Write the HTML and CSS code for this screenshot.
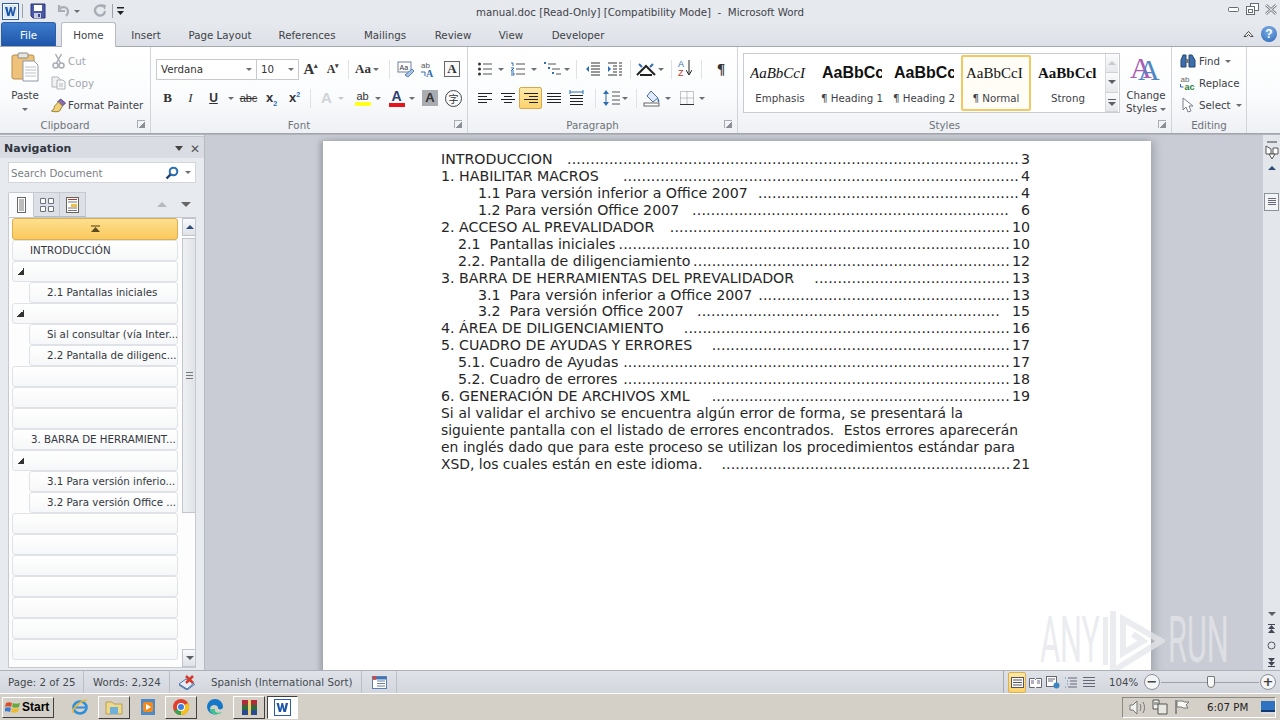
FILE: index.html
```html
<!DOCTYPE html>
<html lang="en">
<head>
<meta charset="utf-8">
<title>manual.doc - Microsoft Word</title>
<link rel="stylesheet" href="styles.css">
</head>
<body>
<div class="app">
  <header class="titlebar">
    <div class="qat">
      <svg class="wlogo" width="17" height="17" viewBox="0 0 17 17"><rect x=".5" y=".5" width="16" height="16" fill="#fff" stroke="#2a5ca8"/><rect x="2" y="2" width="13" height="13" fill="#dbe8f6"/><path d="M3 4h2.400l1.200 6 1.400-6h1.600l1.400 6 1.200-6H14l-2.200 9H9.900L8.800 8 7.500 13H5.400z" fill="#1d56a8"/></svg>
      <i class="qsep"></i>
      <svg class="q1" width="16" height="16" viewBox="0 0 16 16"><path d="M1 1h14v14H3l-2-2z" fill="#4a58a8" stroke="#2b3478"/><rect x="4" y="2" width="8" height="6" fill="#fff"/><rect x="4" y="10" width="7" height="5" fill="#c6cbe0"/><rect x="8" y="11" width="2" height="3" fill="#3b4690"/></svg>
      <svg class="q2" width="14" height="14" viewBox="0 0 14 14"><path d="M3 1v6h6M3 6c2-4 9-4 9 2 0 2-1 3-2 4" fill="none" stroke="#a9aeb6" stroke-width="2.200"/></svg>
      <span class="mini-arrow q3"></span>
      <svg class="q4" width="14" height="14" viewBox="0 0 14 14"><path d="M10 2.500A5 5 0 1 0 12 7" fill="none" stroke="#a9aeb6" stroke-width="2.400"/><path d="M8 0l5 1-1 5z" fill="#a9aeb6"/></svg>
      <i class="qsep q5"></i>
      <svg class="q6" width="9" height="10" viewBox="0 0 9 10"><rect x="1" y="1" width="7" height="1.500" fill="#222"/><path d="M1 5h7L4.500 9z" fill="#222"/></svg>
    </div>
    <div class="doc-title">manual.doc [Read-Only] [Compatibility Mode]&nbsp; -&nbsp; Microsoft Word</div>
    <div class="win-controls">
      <svg width="12" height="8" viewBox="0 0 12 8"><rect x=".5" y="2.500" width="10" height="4" rx="1" fill="#fff" stroke="#666c75"/></svg>
      <svg width="13" height="12" viewBox="0 0 13 12"><rect x="4.500" y=".5" width="8" height="7" fill="#fff" stroke="#666c75"/><rect x=".5" y="3.500" width="8" height="8" fill="#fff" stroke="#666c75"/><rect x="2.500" y="6.500" width="4" height="3" fill="none" stroke="#666c75"/></svg>
      <svg width="12" height="11" viewBox="0 0 12 11"><path d="M1 1l10 9M11 1L1 10" stroke="#7b8089" stroke-width="2.600"/><path d="M1 1l10 9M11 1L1 10" stroke="#fff" stroke-width="1"/></svg>
    </div>
  </header>

  <nav class="tabbar">
    <span class="tab file">File</span>
    <span class="tab home">Home</span>
    <span class="tab t-insert">Insert</span>
    <span class="tab t-layout">Page Layout</span>
    <span class="tab t-ref">References</span>
    <span class="tab t-mail">Mailings</span>
    <span class="tab t-review">Review</span>
    <span class="tab t-view">View</span>
    <span class="tab t-dev">Developer</span>
    <span class="tab-right">
      <svg width="11" height="8" viewBox="0 0 11 8"><path d="M1 6.500l4.500-5 4.500 5H7.500l-2-2-2 2z" fill="#fff" stroke="#444"/></svg>
      <span class="help">?</span>
    </span>
  </nav>

  <section class="ribbon">
    <div class="group g-clip">
      <div class="g-body clip-body">
        <div class="paste">
          <svg width="28" height="30" viewBox="0 0 28 30"><rect x="1" y="3" width="22" height="24" rx="2" fill="#eec27a" stroke="#b78c4a"/><rect x="7" y="1" width="10" height="5" rx="1" fill="#e7e7e0" stroke="#8a8a80"/><path d="M12 9h11l4 4v16H12z" fill="#fff" stroke="#8f9aa8"/><path d="M14 15h11M14 18h11M14 21h11M14 24h11" stroke="#b9c2cc"/></svg>
          <span class="lbl paste-l">Paste</span>
          <span class="mini-arrow"></span>
        </div>
        <div class="clip-list">
          <div class="clip-row dim"><svg width="14" height="16" viewBox="0 0 14 16"><path d="M4 1l5 9M10 1L5 10" stroke="#a8adb4" stroke-width="1.500"/><circle cx="4" cy="12.500" r="2.500" fill="none" stroke="#a8adb4" stroke-width="1.500"/><circle cx="10" cy="12.500" r="2.500" fill="none" stroke="#a8adb4" stroke-width="1.500"/></svg><span>Cut</span></div>
          <div class="clip-row dim"><svg width="15" height="14" viewBox="0 0 15 14"><path d="M1 1h6l2 2v8H1z" fill="#f0f1f3" stroke="#b0b4ba"/><path d="M6 4h6l2 2v7H6z" fill="#f7f7f8" stroke="#b0b4ba"/><path d="M8 8h4M8 10h4" stroke="#bbb"/></svg><span>Copy</span></div>
          <div class="clip-row"><svg width="16" height="15" viewBox="0 0 16 15"><path d="M10 1l5 4-3 3-5-4z" fill="#8a6fb0" stroke="#5b4580"/><path d="M8 4l4 4-3 5c-2 1-5 1-8 0 2-1 3-3 3-5z" fill="#efd27a" stroke="#9a7c30"/></svg><span>Format Painter</span></div>
        </div>
      </div>
      <div class="g-label">Clipboard<i class="launch"></i></div>
    </div>

    <div class="group g-font">
      <div class="g-body stack">
        <div class="r r1 font-r1">
          <span class="combo c-font">Verdana<b class="mini-arrow"></b></span>
          <span class="combo c-size">10<b class="mini-arrow"></b></span>
          <span class="ic w-grow serif-a big">A<sup>▴</sup></span>
          <span class="ic w-shrink serif-a small">A<sup>▾</sup></span>
          <i class="vsep s1"></i>
          <span class="ic w-aa"><em class="aa">Aa</em><b class="mini-arrow"></b></span>
          <i class="vsep s2"></i>
          <svg class="spell" width="18" height="17" viewBox="0 0 18 17"><rect x="1" y="1" width="13" height="10" fill="#fff" stroke="#6e7fa0"/><text x="2.500" y="8.500" font-size="7" font-family="Liberation Sans" fill="#334">Aa</text><path d="M8 14l7-6 2 2-6 6z" fill="#a6c7ea" stroke="#5a7fb0"/></svg>
          <svg class="spell2" width="18" height="17" viewBox="0 0 18 17"><text x="1" y="7" font-size="8" font-family="Liberation Sans" fill="#555">ab</text><text x="6" y="16" font-size="10" font-weight="700" font-family="Liberation Serif" fill="#2e6db4">A</text><path d="M1 11h4v4" fill="none" stroke="#2e6db4"/></svg>
          <span class="boxa">A</span>
        </div>
        <div class="r r2 font-r2">
          <span class="fb b">B</span><span class="fb i">I</span><span class="fb u">U</span><b class="mini-arrow ma-u"></b>
          <span class="fb strike">abc</span>
          <span class="fb xs">x<sub>2</sub></span>
          <span class="fb xs">x<sup>2</sup></span>
          <i class="vsep s3"></i>
          <span class="fb ghost">A</span><b class="mini-arrow ma-dim"></b>
          <span class="fb hl"><span>ab</span><i></i></span><b class="mini-arrow"></b>
          <span class="fb colr">A<i></i></span><b class="mini-arrow"></b>
          <span class="fb shade">A</span>
          <span class="fb zi">字</span>
        </div>
      </div>
      <div class="g-label">Font<i class="launch"></i></div>
    </div>

    <div class="group g-para">
      <div class="g-body stack">
        <div class="r r1 para-r1">
          <svg width="16" height="14" viewBox="0 0 16 14"><path d="M6 2h9M6 7h9M6 12h9" stroke="#555"/><circle cx="2.500" cy="2" r="1.500" fill="#333"/><circle cx="2.500" cy="7" r="1.500" fill="#333"/><circle cx="2.500" cy="12" r="1.500" fill="#333"/></svg><b class="mini-arrow m1"></b>
          <svg class="p2" width="16" height="14" viewBox="0 0 16 14"><path d="M6 2h9M6 7h9M6 12h9" stroke="#555"/><path d="M1 1h2v3M1 6h3L1 9h3M1 11h3v2H1" fill="none" stroke="#2e6db4"/></svg><b class="mini-arrow m1"></b>
          <svg class="p3" width="19" height="14" viewBox="0 0 19 14"><path d="M5 2h8M9 7h8M13 12h5" stroke="#555"/><path d="M1 1h2M5 6h2M9 11h2" stroke="#2e6db4" stroke-width="2"/></svg><b class="mini-arrow m2"></b>
          <i class="vsep s4"></i>
          <svg class="p4" width="16" height="14" viewBox="0 0 16 14"><path d="M6 1h9M6 4h9M6 7h9M6 10h9M6 13h9" stroke="#333"/><path d="M4 4L1 7l3 3z" fill="#2e6db4"/></svg>
          <svg class="p5" width="16" height="14" viewBox="0 0 16 14"><path d="M1 1h9M6 4h4M6 7h4M6 10h4M1 13h9M12 1h3M12 4h3M12 7h3M12 10h3M12 13h3" stroke="#333"/><path d="M1 4l3 3-3 3z" fill="#2e6db4"/></svg>
          <i class="vsep s5"></i>
          <svg class="p6" width="20" height="14" viewBox="0 0 20 14"><path d="M1 13L10 4l9 9M4 13h12" fill="none" stroke="#222" stroke-width="2"/><path d="M3 2l3 3M17 2l-3 3" stroke="#2e6db4" stroke-width="2"/></svg><b class="mini-arrow m3"></b>
          <i class="vsep s6"></i>
          <span class="sort"><em>A</em><em class="z">Z</em><svg width="6" height="16" viewBox="0 0 6 16"><path d="M3 0v14M0 10l3 5 3-5" fill="none" stroke="#222"/></svg></span>
          <i class="vsep s7"></i>
          <span class="pil">¶</span>
        </div>
        <div class="r r2 para-r2">
          <span class="al"><svg width="14" height="11" viewBox="0 0 14 11"><path d="M0 .5h14M0 3.500h9M0 6.500h14M0 9.500h9" stroke="#222"/></svg></span>
          <span class="al"><svg width="14" height="11" viewBox="0 0 14 11"><path d="M0 .5h14M3 3.500h8M0 6.500h14M3 9.500h8" stroke="#222"/></svg></span>
          <span class="al on"><svg width="14" height="11" viewBox="0 0 14 11"><path d="M0 .5h14M5 3.500h9M0 6.500h14M5 9.500h9" stroke="#222"/></svg></span>
          <span class="al"><svg width="14" height="11" viewBox="0 0 14 11"><path d="M0 .5h14M0 3.500h14M0 6.500h14M0 9.500h14" stroke="#222"/></svg></span>
          <span class="al"><svg width="15" height="16" viewBox="0 0 15 16"><path d="M1 5.500h13M1 8.500h13M1 11.500h13M1 14.500h13" stroke="#222"/><path d="M1 2h13" stroke="#2e6db4"/><path d="M1 0v4M14 0v4" stroke="#2e6db4"/></svg></span>
          <i class="vsep s8"></i>
          <svg class="ls" width="18" height="16" viewBox="0 0 18 16"><path d="M9 2h8M9 6h8M9 10h8M9 14h8" stroke="#555"/><path d="M3 0l3 4H0zM3 16l3-4H0z" fill="#2e6db4"/><path d="M3 4v8" stroke="#2e6db4"/></svg><b class="mini-arrow m4"></b>
          <i class="vsep s9"></i>
          <svg class="shd" width="18" height="17" viewBox="0 0 18 17"><path d="M8 1l7 7-5 4-6-6z" fill="#dfeafa" stroke="#4a6a9a"/><path d="M15 8c1 2 2 3 1 4s-2-1-1-4z" fill="#2e6db4"/><rect x="1" y="13" width="15" height="3" fill="#fff" stroke="#666"/></svg><b class="mini-arrow m5"></b>
          <svg class="brd" width="14" height="14" viewBox="0 0 14 14"><path d="M.5.500h13v13H.500zM.5 7h13M7 .500v13" fill="none" stroke="#8a8f96" stroke-dasharray="1 1"/><path d="M0 13.500h14" stroke="#333"/></svg><b class="mini-arrow m6"></b>
        </div>
      </div>
      <div class="g-label">Paragraph<i class="launch"></i></div>
    </div>

    <div class="group g-styles">
      <div class="g-body styles-body">
        <div class="gallery">
          <div class="st"><span class="s-em">AaBbCcI</span><small>Emphasis</small></div>
          <div class="st"><span class="s-h">AaBbCc</span><small>¶ Heading 1</small></div>
          <div class="st"><span class="s-h">AaBbCc</span><small>¶ Heading 2</small></div>
          <div class="st sel"><span class="s-n">AaBbCcI</span><small>¶ Normal</small></div>
          <div class="st"><span class="s-s">AaBbCcl</span><small>Strong</small></div>
          <div class="g-scroll">
            <span><i class="up dimmed"></i></span>
            <span><i class="down"></i></span>
            <span><i class="more"></i></span>
          </div>
        </div>
        <div class="change">
          <span class="bigA"><em class="a1">A</em><em class="a2">A</em></span>
          <span class="lbl">Change</span>
          <span class="lbl">Styles<b class="mini-arrow"></b></span>
        </div>
      </div>
      <div class="g-label">Styles<i class="launch"></i></div>
    </div>

    <div class="group g-edit">
      <div class="g-body edit-body">
        <div class="clip-row"><svg width="16" height="14" viewBox="0 0 16 14"><path d="M1 13V6l2-5h3v12zM9 13V1h3l3 5v7z" fill="#3d6fae" stroke="#24476f"/><rect x="6" y="5" width="3" height="4" fill="#777"/></svg><span>Find</span><b class="mini-arrow"></b></div>
        <div class="clip-row"><svg width="17" height="16" viewBox="0 0 17 16"><text x="1" y="7" font-size="8" font-family="Liberation Sans" fill="#666">ab</text><text x="5" y="15" font-size="9" font-weight="700" font-family="Liberation Sans" fill="#2e7d3a">ac</text><path d="M1 9v3h3" fill="none" stroke="#2e6db4"/></svg><span>Replace</span></div>
        <div class="clip-row"><svg width="14" height="16" viewBox="0 0 14 16"><path d="M2 1v12l3-3 2 5 3-1-2-5h4z" fill="#fff" stroke="#77808c"/></svg><span>Select</span><b class="mini-arrow"></b></div>
      </div>
      <div class="g-label">Editing</div>
    </div>
  </section>

  <main class="work">
    <aside class="nav">
      <div class="nav-head"><strong>Navigation</strong><b class="tri-d"></b><span class="nav-x">✕</span></div>
      <div class="search"><span>Search Document</span><svg width="14" height="14" viewBox="0 0 14 14"><circle cx="8.500" cy="5.500" r="3.800" fill="none" stroke="#2c6eb5" stroke-width="2"/><path d="M5.500 8.500L1.500 12.500" stroke="#1b3f70" stroke-width="2.400"/></svg><b class="mini-arrow"></b></div>
      <div class="nav-tabs">
        <span class="ntab active"><svg width="9" height="16" viewBox="0 0 9 16"><rect x=".5" y=".5" width="8" height="15" fill="#fff" stroke="#666"/><path d="M2 3h5M2 5h5M2 7h5M2 9h5M2 11h5M2 13h5" stroke="#777"/></svg></span>
        <span class="ntab"><svg width="14" height="14" viewBox="0 0 14 14"><path d="M.5.500h5v5h-5zM8.500.500h5v5h-5zM.5 8.500h5v5h-5zM8.500 8.500h5v5h-5z" fill="#fff" stroke="#6a7280"/></svg></span>
        <span class="ntab"><svg width="13" height="16" viewBox="0 0 13 16"><rect x=".5" y=".5" width="12" height="15" fill="#fff" stroke="#665"/><path d="M2 2.500h9" stroke="#b33"/><path d="M2 5h9M2 11h9M2 13.500h9" stroke="#777"/><rect x="5" y="7" width="6" height="3" fill="#f0c040"/></svg></span>
        <span class="nav-arrows"><i class="up g"></i><i class="down"></i></span>
      </div>
      <div class="outline">
        <ul class="rows">
          <li class="row cur"><svg width="9" height="8" viewBox="0 0 9 8"><path d="M0 1h9" stroke="#4a3a10"/><path d="M4.500 2L9 7H0z" fill="#5a4a20"/></svg></li>
          <li class="row"><span class="t1">INTRODUCCIÓN</span></li>
          <li class="row"><i class="expander"></i></li>
          <li class="row sub"><span>2.1 Pantallas iniciales</span></li>
          <li class="row"><i class="expander"></i></li>
          <li class="row sub"><span>Si al consultar (vía Inter...</span></li>
          <li class="row sub"><span>2.2 Pantalla de diligenc...</span></li>
          <li class="row"></li>
          <li class="row"></li>
          <li class="row"></li>
          <li class="row"><span class="t1 t1b">3. BARRA DE HERRAMIENT...</span></li>
          <li class="row"><i class="expander"></i></li>
          <li class="row sub"><span>3.1 Para versión inferio...</span></li>
          <li class="row sub"><span>3.2 Para versión Office ...</span></li>
          <li class="row"></li>
          <li class="row"></li>
          <li class="row"></li>
          <li class="row"></li>
          <li class="row"></li>
          <li class="row"></li>
          <li class="row"></li>
        </ul>
        <div class="nscroll">
          <span class="nbtn"><i class="up navy"></i></span>
          <span class="nthumb"><i></i></span>
          <span class="nbtn end"><i class="down"></i></span>
        </div>
      </div>
    </aside>

    <div class="doc-area">
      <article class="page">
        <div class="toc"><span>INTRODUCCION</span><i>.................................................................................................</i><span>3</span></div>
        <div class="toc"><span>1. HABILITAR MACROS</span><i>.....................................................................................</i><span>4</span></div>
        <div class="toc l2"><span>1.1 Para versión inferior a Office 2007</span><i>........................................................</i><span>4</span></div>
        <div class="toc l2"><span>1.2 Para versión Office 2007</span><i class="short">....................................................................</i><span>6</span></div>
        <div class="toc"><span>2. ACCESO AL PREVALIDADOR</span><i>.........................................................................</i><span>10</span></div>
        <div class="toc l1"><span>2.1&nbsp; Pantallas iniciales</span><i>....................................................................................</i><span>10</span></div>
        <div class="toc l1"><span>2.2. Pantalla de diligenciamiento</span><i>....................................................................</i><span>12</span></div>
        <div class="toc"><span>3. BARRA DE HERRAMIENTAS DEL PREVALIDADOR</span><i>..........................................</i><span>13</span></div>
        <div class="toc l2"><span>3.1&nbsp; Para versión inferior a Office 2007</span><i>......................................................</i><span>13</span></div>
        <div class="toc l2"><span>3.2&nbsp; Para versión Office 2007</span><i class="short">.................................................................</i><span>15</span></div>
        <div class="toc"><span>4. ÁREA DE DILIGENCIAMIENTO</span><i>......................................................................</i><span>16</span></div>
        <div class="toc"><span>5. CUADRO DE AYUDAS Y ERRORES</span><i>................................................................</i><span>17</span></div>
        <div class="toc l1"><span>5.1. Cuadro de Ayudas</span><i>...................................................................................</i><span>17</span></div>
        <div class="toc l1"><span>5.2. Cuadro de errores</span><i>...................................................................................</i><span>18</span></div>
        <div class="toc"><span>6. GENERACIÓN DE ARCHIVOS XML</span><i>................................................................</i><span>19</span></div>
        <p class="para pa">Si al validar el archivo se encuentra algún error de forma, se presentará la</p>
        <p class="para pb">siguiente pantalla con el listado de errores encontrados.&nbsp; Estos errores aparecerán</p>
        <p class="para pc">en inglés dado que para este proceso se utilizan los procedimientos estándar para</p>
        <div class="toc xsd"><span>XSD, los cuales están en este idioma.</span><i>..............................................................</i><span>21</span></div>
      </article>
      <div class="watermark" aria-label="ANY RUN">
        <span>ANY</span>
        <svg width="62" height="64" viewBox="0 0 62 64"><path d="M2 8v48M10 2v60L58 32 20 10v34l20-12-10-7" fill="none" stroke="currentColor" stroke-width="6"/></svg>
        <span>RUN</span>
      </div>
    </div>

    <div class="vbar">
      <i class="split"></i>
      <svg class="rul" width="14" height="15" viewBox="0 0 14 15"><path d="M1 1l5 3v5H1z M8 3l5 0v6H8z" fill="#fff" stroke="#555"/><path d="M4 9l3 5 3-5z" fill="#fff" stroke="#555"/></svg>
      <i class="up navy v-up"></i>
      <span class="vthumb"><svg width="8" height="8" viewBox="0 0 8 8"><path d="M0 .5h8M0 2.500h8M0 4.500h8M0 6.500h8" stroke="#667"/></svg></span>
      <i class="spacer"></i>
      <i class="down v-dn"></i>
      <svg class="dbl" width="9" height="10" viewBox="0 0 9 10"><path d="M1 .5h7" stroke="#445"/><path d="M4.500 1L8 5H1zM4.500 5L8 9H1z" fill="#445"/></svg>
      <svg class="dot-o" width="9" height="9" viewBox="0 0 9 9"><circle cx="4.500" cy="4.500" r="3.500" fill="none" stroke="#556"/></svg>
      <svg class="dbl last" width="9" height="10" viewBox="0 0 9 10"><path d="M1 9.500h7" stroke="#445"/><path d="M4.500 5L8 1H1zM4.500 9L8 5H1z" fill="#445"/></svg>
    </div>
  </main>

  <footer class="status">
    <span class="sb s-page">Page: 2 of 25</span>
    <span class="sb s-words">Words: 2,324</span>
    <span class="sb s-lang"><svg width="18" height="15" viewBox="0 0 18 15"><path d="M1 9l7-5 8 4-7 6z" fill="#e8eef8" stroke="#4a6fa8"/><path d="M1 10l8 5 8-6" fill="none" stroke="#4a6fa8"/><path d="M8 1l7 7M15 1L8 8" stroke="#d43a2a" stroke-width="2.500"/></svg><span>Spanish (International Sort)</span></span>
    <span class="sb s-macro"><svg width="15" height="13" viewBox="0 0 15 13"><rect x=".5" y=".5" width="14" height="12" fill="#fff" stroke="#5b7fae"/><rect x="1" y="1" width="13" height="2.500" fill="#3f76ba"/><path d="M5 5h8M5 7.500h8M5 10h8" stroke="#6a7f9a"/><circle cx="2.500" cy="2" r="2" fill="#d8453a"/></svg></span>
    <span class="status-right">
      <span class="vw on"><svg width="13" height="11" viewBox="0 0 13 11"><rect x=".5" y=".5" width="12" height="10" fill="#fff" stroke="#555"/><path d="M2 3h9M2 5.500h9M2 8h9" stroke="#555"/></svg></span>
      <span class="vw"><svg width="13" height="11" viewBox="0 0 13 11"><path d="M.5 1.500h5l1 1 1-1h5v9h-5l-1 1-1-1h-5z" fill="#fff" stroke="#667"/><path d="M2 4h3M2 6h3M8 4h3M8 6h3" stroke="#667"/></svg></span>
      <span class="vw"><svg width="14" height="13" viewBox="0 0 14 13"><rect x=".5" y=".5" width="10" height="10" fill="#fff" stroke="#667"/><path d="M2 3h7M2 5h5" stroke="#667"/><circle cx="10.500" cy="9.500" r="3" fill="#3a85c0"/></svg></span>
      <span class="vw"><svg width="12" height="11" viewBox="0 0 12 11"><path d="M3 1h9M5 4h7M5 7h7M3 10h9" stroke="#667"/><path d="M0 1h1M2 4h1M2 7h1M0 10h1" stroke="#48a"/></svg></span>
      <span class="vw"><svg width="12" height="11" viewBox="0 0 12 11"><path d="M0 .5h12M0 3.500h12M0 6.500h12M0 9.500h12" stroke="#667"/></svg></span>
      <span class="zoom-pct">104%</span>
      <span class="zb">−</span>
      <span class="slider"><i></i></span>
      <span class="zb">+</span>
    </span>
  </footer>

  <div class="taskbar">
    <span class="start"><svg width="16" height="15" viewBox="0 0 16 15"><path d="M1 3c2-1 4-1 6 0L6 7C4 6 2 6 0 7z" fill="#d8502a"/><path d="M8 3c2 1 4 1 7 0l-1 4c-2 1-5 1-7 0z" fill="#6aa83a"/><path d="M0 8c2-1 4-1 6 0l-1 4c-2-1-4-1-6 0z" fill="#3a7ad0"/><path d="M7 8c2 1 4 1 7 0l-1 4c-3 1-5 1-7 0z" fill="#eebb30"/></svg>Start</span>
    <span class="tk t-ie"><svg width="18" height="18" viewBox="0 0 18 18"><ellipse cx="9" cy="9.500" rx="6.500" ry="6" fill="none" stroke="#2f8edb" stroke-width="2.600"/><path d="M4 9.500h10" stroke="#2f8edb" stroke-width="2"/><path d="M2 15C1 11 8 3 16 2" fill="none" stroke="#e8b830" stroke-width="1.500"/></svg></span>
    <span class="tk btn t-fold"><svg width="18" height="16" viewBox="0 0 18 16"><path d="M1 3h6l2 2h8v10H1z" fill="#eed98a" stroke="#b8a050"/><rect x="5" y="8" width="8" height="7" fill="#6fb0d8"/></svg></span>
    <span class="tk t-wmp"><svg width="16" height="18" viewBox="0 0 16 18"><rect x="1" y="1" width="14" height="16" fill="#4f8ac4"/><rect x="3" y="4" width="10" height="10" rx="2" fill="#f28a1e"/><path d="M6 6l5 3-5 3z" fill="#fff"/></svg></span>
    <span class="tk btn t-chr"><svg width="18" height="18" viewBox="0 0 18 18"><circle cx="9" cy="9" r="8" fill="#e0412f"/><path d="M9 9L2 13a8 8 0 0 0 7 4z" fill="#3aa350"/><path d="M9 9l7-4a8 8 0 0 1-7 12z" fill="#f5c21b"/><circle cx="9" cy="9" r="4" fill="#fff"/><circle cx="9" cy="9" r="3" fill="#3f7fe0"/></svg></span>
    <span class="tk t-edge"><svg width="18" height="18" viewBox="0 0 18 18"><path d="M1 9a8 8 0 0 1 16 0c0 3-5 3-5 1 0-4-8-4-8 1 0 3 3 6 8 5a8 8 0 0 1-11-7z" fill="#1478c8"/><path d="M4 11c0 3 3 6 8 5 2 0 3-1 4-2-4 2-8 0-7-3" fill="#3bc48a"/></svg></span>
    <span class="tk btn t-rar"><svg width="17" height="17" viewBox="0 0 17 17"><rect x="1" y="1" width="15" height="5" fill="#b02a3a"/><rect x="1" y="6" width="15" height="5" fill="#2f6a3a"/><rect x="1" y="11" width="15" height="5" fill="#2a4a90"/><rect x="7" y="1" width="3" height="15" fill="#e8d070"/></svg></span>
    <span class="tk btn active t-word"><svg width="17" height="17" viewBox="0 0 17 17"><rect x=".5" y=".5" width="16" height="16" fill="#fff" stroke="#2a5ca8"/><path d="M2.500 4h2.400l1.200 6 1.400-6h1.600l1.400 6 1.200-6h2.400l-2.200 9H9.400L8.300 8 7 13H4.900z" fill="#1d56a8"/></svg></span>
    <span class="tray">
      <svg width="17" height="15" viewBox="0 0 17 15"><path d="M1 5h3l4-4v13l-4-4H1z" fill="#f2f2f0" stroke="#777"/><path d="M11 4c1 2 1 5 0 7M14 2c2 3 2 8 0 11" fill="none" stroke="#777"/></svg>
      <svg width="16" height="16" viewBox="0 0 16 16"><path d="M1 1h6v9H1z" fill="#f0f0ec" stroke="#555"/><path d="M6 5h9v10H6z" fill="#e8e8e2" stroke="#555"/><path d="M3 3v3M5 3v3" stroke="#555"/></svg>
      <svg width="16" height="16" viewBox="0 0 16 16"><path d="M2 1v14" stroke="#777" stroke-width="1.500"/><path d="M3 2h6l1 1h5l-3 3 2 3H9L8 8H3z" fill="#f8f8f6" stroke="#777"/></svg>
      <span class="clock">6:07 PM</span>
      <svg width="14" height="13" viewBox="0 0 14 13"><rect width="14" height="13" fill="#2f72c2"/><rect y="9" width="14" height="2" fill="#123a70"/><rect y="11" width="14" height="2" fill="#d9dbe0"/></svg>
    </span>
  </div>
</div>
</body>
</html>
```
FILE: styles.css
```css
* { box-sizing: border-box; }
html, body { margin: 0; padding: 0; height: 100%; overflow: hidden; }
body { font-family: "DejaVu Sans", sans-serif; font-size: 10.25px; color: #3c4046; }
i, em, b { font-style: normal; font-weight: normal; }
svg { display: block; flex: none; }
.app { width: 1280px; height: 720px; display: flex; flex-direction: column; background: #c9ccd4; }

/* Title bar */
.titlebar { height: 22px; flex: none; display: flex; align-items: center; background: #e6e9ee; position: relative; }
.qat { display: flex; align-items: center; padding-left: 2px; }
.qsep { width: 1px; height: 14px; background: #9ba1a9; margin-left: 3px; }
.q1 { margin-left: 7px; }
.q2 { margin-left: 10px; }
.q3 { margin-left: 4px; border-top-color: #a9aeb6; }
.q4 { margin-left: 13px; }
.q5 { margin-left: 5px; }
.q6 { margin-left: 3px; }
.doc-title { position: absolute; left: 0; right: 0; top: 6px; text-align: center; line-height: 13px; color: #3e4248; }
.win-controls { margin-left: auto; display: flex; align-items: center; gap: 6px; padding: 0 3px 4px 0; }

/* Tabs */
.tabbar { height: 25px; flex: none; display: flex; align-items: flex-end; background: linear-gradient(#e6e9ee, #dde1e7); border-bottom: 1px solid #a5a9b0; position: relative; }
.tab { height: 24px; line-height: 26px; text-align: center; flex: none; color: #3e4248; }
.file { width: 55px; margin-left: 1px; background: linear-gradient(#3d7cce, #1f55a8); color: #fff; border-radius: 3px 3px 0 0; border: 1px solid #2c5fa8; border-bottom: 0; line-height: 24px; }
.home { width: 55px; margin-left: 5px; background: #fff; border: 1px solid #b6bac1; border-bottom: 0; border-radius: 3px 3px 0 0; height: 25px; margin-bottom: -1px; position: relative; line-height: 25px; }
.t-insert { width: 60px; }
.t-layout { width: 88px; }
.t-ref { width: 86px; }
.t-mail { width: 70px; }
.t-review { width: 66px; }
.t-view { width: 50px; }
.t-dev { width: 84px; }
.tab-right { margin-left: auto; display: flex; align-items: center; gap: 7px; height: 24px; padding-right: 3px; }
.help { width: 16px; height: 16px; border-radius: 50%; background: radial-gradient(circle at 50% 30%, #7fb0e8, #2d67b8); color: #fff; font: 700 12px/16px "Liberation Sans", sans-serif; text-align: center; }

/* Ribbon */
.ribbon { height: 87px; flex: none; display: flex; background: linear-gradient(#fff 0, #fbfcfd 55%, #eef0f4 100%); border-bottom: 1px solid #a3a7ad; box-shadow: 0 1px 0 #b0b4bb; }
.group { flex: none; display: flex; flex-direction: column; border-right: 1px solid #d1d5da; position: relative; }
.g-clip { width: 151px; }
.g-font { width: 317px; }
.g-para { width: 270px; }
.g-styles { width: 434px; }
.g-edit { width: 75px; }
.g-body { height: 70px; flex: none; }
.g-label { height: 16px; line-height: 16px; text-align: center; color: #6d7279; position: relative; padding-right: 20px; }
.g-edit .g-label { padding-right: 0; }
.launch { position: absolute; right: 5px; top: 3px; width: 8px; height: 8px; border: 1px solid #a7abb2; border-width: 1px 0 0 1px; background: linear-gradient(135deg, transparent 55%, #8b9098 55%); }
.mini-arrow { display: inline-block; width: 0; height: 0; border: 3px solid transparent; border-top: 3px solid #6a6e75; border-bottom: 0; flex: none; }
.lbl { display: block; line-height: 12px; }
.clip-body { display: flex; padding: 5px 0 0 10px; }
.paste { width: 30px; display: flex; flex-direction: column; align-items: center; }
.paste-l { margin-top: 7px; }
.paste .mini-arrow { margin-top: 7px; }
.clip-list { margin-left: 10px; margin-top: -2px; }
.clip-row { height: 22px; display: flex; align-items: center; color: #3e4248; white-space: nowrap; }
.clip-row svg { width: 17px; margin-right: 0; }
.clip-list .clip-row > svg { margin-right: 1px; }
.clip-row.dim { color: #a2a6ac; }

.stack { display: flex; flex-direction: column; padding: 11px 0 0 5px; }
.r { display: flex; align-items: center; }
.r1 { height: 22px; }
.r2 { height: 22px; margin-top: 7px; }
.combo { height: 21px; border: 1px solid #c6cad0; background: #fff; display: flex; align-items: center; justify-content: space-between; padding: 0 4px; color: #333; }
.c-font { width: 101px; }
.c-size { width: 43px; margin-left: -1px; }
.ic { display: flex; align-items: center; justify-content: center; }
.serif-a { font-family: "Liberation Serif", serif; font-weight: 700; color: #333; }
.big { font-size: 15px; width: 22px; margin-left: 1px; }
.small { font-size: 12px; width: 22px; }
.serif-a sup { font-size: 7px; color: #444; margin-top: -6px; }
.vsep { width: 1px; height: 19px; background: #dfe2e6; flex: none; }
.s1 { margin-left: 4px; }
.w-aa { width: 32px; margin-left: 2px; gap: 2px; }
.aa { font: 700 13px "Liberation Serif", serif; color: #333; }
.s2 { margin-left: 6px; }
.spell { margin-left: 7px; }
.spell2 { margin-left: 5px; }
.boxa { width: 16px; height: 16px; margin-left: 6px; border: 1px solid #666; font: 700 13px/14px "Liberation Serif", serif; text-align: center; color: #333; background: #f8f8f8; }
.fb { width: 23px; text-align: center; flex: none; color: #333; font-family: "Liberation Serif", serif; font-size: 13px; font-weight: 700; display: block; line-height: 16px; position: relative; }
.fb.i { font-style: italic; font-weight: 400; }
.fb.u { text-decoration: underline; font-family: "Liberation Sans", sans-serif; font-size: 12px; }
.ma-u { margin: 0 1px 0 3px; }
.strike { font-family: "Liberation Sans", sans-serif; font-size: 11px; text-decoration: line-through; font-weight: 400; margin-left: 2px; }
.xs { font-family: "Liberation Sans", sans-serif; font-size: 13px; }
.xs sub, .xs sup { font-size: 7px; line-height: 0; color: #2e6db4; }
.s3 { margin: 0 4px; }
.ghost { font: 700 15px/16px "Liberation Sans", sans-serif; color: #d0d3d8; }
.ma-dim { border-top-color: #c6c9ce; margin-right: 7px; }
.hl { font: 400 11px/12px "Liberation Sans", sans-serif; height: 17px; margin-right: 1px; }
.hl i { display: block; height: 4px; width: 16px; margin: 0 auto; background: #ffff20; }
.hl + .mini-arrow { margin-right: 4px; }
.colr { font: 700 14px/13px "Liberation Sans", sans-serif; color: #2d3e70; height: 17px; margin-right: 1px; }
.colr i { display: block; height: 4px; width: 16px; margin: 0 auto; background: #e8141c; }
.colr + .mini-arrow { margin-right: 4px; }
.shade { width: 16px; margin: 0 3px; background: #a9acb0; font: 700 13px/16px "Liberation Sans", sans-serif; }
.zi { width: 17px; height: 17px; margin-left: 4px; border: 1px solid #444; border-radius: 50%; font: 400 10px/15px "Noto Sans CJK SC", sans-serif; }

.g-para .stack { padding-left: 9px; }
.m1 { margin: 0 6px 0 5px; }
.m2 { margin-left: 2px; }
.s4 { margin: 0 8px 0 6px; }
.p5 { margin-left: 6px; }
.s5 { margin: 0 5px 0 7px; }
.m3 { margin-left: 2px; }
.s6 { margin: 0 6px 0 7px; }
.sort { display: grid; grid-template-columns: 8px 7px; grid-template-rows: 9px 9px; font: 700 9px/9px "Liberation Sans", sans-serif; }
.sort em { color: #2e6db4; }
.sort .z { color: #b9392d; grid-row: 2; grid-column: 1; }
.sort svg { grid-column: 2; grid-row: 1 / span 2; }
.s7 { margin: 0 15px 0 8px; }
.pil { font: 700 15px "Liberation Serif", serif; color: #333; }
.para-r2 { margin-left: -4px; }
.al { width: 23px; height: 22px; display: flex; align-items: center; justify-content: center; flex: none; }
.al.on { background: linear-gradient(#ffe9a8, #fdd36c); border: 1px solid #d6a94c; border-radius: 2px; }
.s8 { margin: 0 7px 0 7px; }
.m4 { margin-left: 1px; }
.s9 { margin: 0 6px 0 8px; }
.m5 { margin: 0 9px 0 4px; }
.m6 { margin-left: 5px; }

.styles-body { display: flex; padding: 6px 0 0 5px; }
.gallery { width: 377px; height: 60px; border: 1px solid #c8ccd2; background: #fff; display: flex; padding: 1px; gap: 2px; }
.st { width: 70px; height: 56px; display: flex; flex-direction: column; align-items: center; overflow: hidden; white-space: nowrap; padding-top: 9px; flex: none; }
.st small { font-size: 10.25px; margin-top: 10px; color: #3e4248; }
.st.sel { border: 2px solid #f3c860; border-radius: 2px; background: #fffdf6; padding-top: 7px; }
.st span { height: 18px; line-height: 18px; display: block; width: 60px; overflow: hidden; text-align: left; color: #111; }
.s-em { font: italic 400 15px "Liberation Serif", serif; }
.s-h { font: 700 16px "Liberation Sans", sans-serif; }
.s-n { font: 400 15px "Liberation Serif", serif; }
.s-s { font: 700 15px "Liberation Serif", serif; }
.g-scroll { display: flex; flex-direction: column; width: 15px; margin: -1px 0 -1px auto; border-left: 1px solid #d6d9de; height: 58px; }
.g-scroll span { flex: 1; background: linear-gradient(#fbfbfc, #e6e8ec); border-bottom: 1px solid #d0d3d8; display: flex; align-items: center; justify-content: center; }
.up { display: block; width: 0; height: 0; border: 4px solid transparent; border-bottom: 4px solid #5a5f68; border-top: 0; }
.down { display: block; width: 0; height: 0; border: 4px solid transparent; border-top: 4px solid #5a5f68; border-bottom: 0; }
.dimmed { border-bottom-color: #c7cad0; }
.more { display: block; width: 8px; border-top: 1px solid #5a5f68; height: 6px; position: relative; }
.more::after { content: ""; position: absolute; left: 0; top: 2px; border: 4px solid transparent; border-top: 4px solid #5a5f68; border-bottom: 0; }
.change { width: 50px; display: flex; flex-direction: column; align-items: center; margin-left: 1px; }
.bigA { height: 36px; width: 32px; position: relative; font: 700 30px/30px "Liberation Serif", serif; }
.a1 { position: absolute; left: 0; top: 0; color: #a85cb4; }
.a2 { position: absolute; left: 8px; top: 2px; color: #4f86c6; }
.change .lbl { line-height: 13px; }
.change .mini-arrow { margin: 0 0 1px 3px; }
.edit-body { padding: 3px 0 0 7px; }
.edit-body .clip-row svg { width: 18px; margin-right: 2px; }
.edit-body .mini-arrow { margin-left: 5px; }

/* Work area */
.work { flex: 1; min-height: 0; display: flex; margin-top: 1px; }
.nav { width: 205px; flex: none; background: #e7eaef; border-right: 1px solid #b6bac1; display: flex; flex-direction: column; padding-top: 1px; }
.nav-head { height: 22px; flex: none; background: #d9dde3; display: flex; align-items: center; padding: 2px 4px 0; border-top: 1px solid #c2c6cd; }
.nav-head strong { font: 700 11px "DejaVu Sans", sans-serif; color: #2f3440; }
.tri-d { width: 0; height: 0; border: 4px solid transparent; border-top: 5px solid #444; border-bottom: 0; margin-left: auto; }
.nav-x { margin-left: 7px; font: 700 12px/12px "DejaVu Sans", sans-serif; color: #555; }
.search { margin: 4px 8px 0; height: 21px; flex: none; background: #fff; border: 1px solid #d2d5da; display: flex; align-items: center; padding: 0 3px 0 2px; color: #7b7f86; }
.search svg { margin-left: auto; margin-right: 6px; }
.search .mini-arrow { margin-right: 1px; }
.nav-tabs { height: 25px; margin: 9px 8px 0; display: flex; flex: none; }
.ntab { width: 26px; background: #dde1e7; border: 1px solid #c6cad0; border-bottom-color: #b6bac1; display: flex; align-items: center; justify-content: center; }
.ntab.active { background: #fafbfc; border-bottom-color: #fafbfc; border-radius: 2px 0 0 0; }
.ntab + .ntab { border-left: 0; }
.nav-arrows { margin-left: auto; display: flex; align-items: center; gap: 14px; padding-right: 5px; }
.nav-arrows .up, .nav-arrows .down { border-width: 5px; }
.nav-arrows .up { border-top: 0; border-bottom-color: #b6bac1; }
.nav-arrows .down { border-bottom: 0; border-top-color: #666; }
.outline { flex: 1; min-height: 0; margin: 0 8px 2px; background: #fdfdfe; border: 1px solid #c6cad0; display: flex; padding: 0 0 0 3px; overflow: hidden; }
.rows { list-style: none; margin: 0; padding: 0; width: 167px; flex: none; overflow: hidden; }
.row { height: 21px; width: 166px; padding-bottom: 1px; background: linear-gradient(#fff, #f6f7f8); border: 1px solid #dfe2e6; border-radius: 3px; display: flex; align-items: center; white-space: nowrap; overflow: hidden; color: #34383e; }
.row.cur { height: 22px; background: linear-gradient(#fddf8e, #fbc95c); border-color: #d9ae55; justify-content: center; }
.row.sub { margin-left: 17px; width: 149px; padding-left: 17px; }
.t1 { margin-left: 17px; }
.t1b { margin-left: 18px; }
.expander { display: block; width: 7px; height: 7px; margin-left: 4px; background: linear-gradient(135deg, transparent 50%, #333 50%); }
.nscroll { width: 15px; margin-left: 3px; flex: none; display: flex; flex-direction: column; gap: 2px; }
.nbtn { height: 18px; background: linear-gradient(#f8f9fb, #dfe2e7); border: 1px solid #bfc3ca; display: flex; align-items: center; justify-content: center; flex: none; }
.nbtn.end { margin-top: auto; }
.navy { border-bottom-color: #2e4a78; }
.nthumb { height: 275px; background: linear-gradient(90deg, #eef0f3, #dfe2e7); border: 1px solid #c2c6cc; display: flex; align-items: center; justify-content: center; flex: none; }
.nthumb i { width: 7px; height: 7px; border-top: 1px solid #777; border-bottom: 1px solid #777; position: relative; }
.nthumb i::after { content: ""; position: absolute; left: 0; right: 0; top: 2px; border-top: 1px solid #777; }

.doc-area { flex: 1; min-width: 0; position: relative; overflow: hidden; display: flex; padding: 6px 0 0 118px; background: #c9ccd4; }
.page { width: 828px; height: 560px; flex: none; background: #fff; padding: 10px 121px 0 118px; font: 14.2px/16.94px "DejaVu Sans", sans-serif; color: #262626; box-shadow: -3px 0 5px #9fa3ab, 4px 0 8px #a6a9b1; }
.toc { display: flex; white-space: nowrap; }
.toc i { margin: 0 2px 0 auto; letter-spacing: .15px; flex: none; }
.toc i.short { margin-right: 12px; }
.l1 { padding-left: 17px; }
.l2 { padding-left: 37px; }
.para { margin: 0; font-size: 13.85px; white-space: nowrap; text-align: justify; text-align-last: justify; }
.pa { width: 522px; }
.pb { width: 577px; }
.pc { width: 574px; letter-spacing: -.05px; }
.xsd { font-size: 13.9px; }
.xsd i { font-size: 14.2px; }
.watermark { position: absolute; left: 835px; top: 474px; display: flex; align-items: center; gap: 3px; color: rgba(228, 230, 234, .75); font: 400 64px/64px "Roboto", sans-serif; }
.watermark span { display: block; width: 60px; white-space: nowrap; transform: scaleX(.48); transform-origin: 0 50%; }
.vbar { width: 17px; flex: none; background: #e3e6eb; display: flex; flex-direction: column; align-items: center; }
.split { width: 10px; height: 2px; background: #8d9198; margin-top: 6px; }
.rul { margin-top: 2px; }
.v-up { margin-top: 6px; }
.vthumb { width: 15px; height: 18px; margin-top: 23px; background: #f3f4f6; border: 1px solid #8d9198; display: flex; align-items: center; justify-content: center; flex: none; }
.spacer { flex: 1; }
.v-dn { margin-bottom: 8px; }
.dot-o { margin: 7px 0; }
.dbl.last { margin-bottom: 3px; }

/* Status bar */
.status { height: 23px; flex: none; display: flex; align-items: center; background: linear-gradient(#dfe3e8, #d3d7dd); border-top: 1px solid #aeb2b8; color: #45494f; }
.sb { height: 22px; line-height: 21px; border-right: 1px solid #bcc0c6; flex: none; display: flex; align-items: center; white-space: nowrap; }
.s-page { width: 84px; padding-left: 8px; }
.s-words { width: 86px; padding-left: 9px; }
.s-lang { width: 192px; padding-left: 8px; }
.s-lang svg { margin-right: 15px; }
.s-macro { width: 35px; padding-left: 10px; }
.status-right { margin-left: auto; display: flex; align-items: center; height: 22px; border-left: 1px solid #a8acb2; padding: 0 4px 0 4px; }
.vw { width: 18px; height: 21px; display: flex; align-items: center; justify-content: center; }
.vw.on { background: linear-gradient(#ffe7a2, #fdd26a); border: 1px solid #d9b05a; border-radius: 2px; }
.zoom-pct { margin-left: 11px; width: 35px; }
.zb { width: 16px; height: 16px; border-radius: 50%; border: 1px solid #8c9097; background: #f4f5f7; font: 700 13px/13px "DejaVu Sans", sans-serif; text-align: center; color: #444; }
.slider { width: 98px; height: 1px; background: #9da1a8; position: relative; margin: 0 1px; }
.slider i { position: absolute; left: 46px; top: -6px; width: 8px; height: 12px; background: #f7f8f9; border: 1px solid #777; border-radius: 1px 1px 4px 4px; }

/* Taskbar */
.taskbar { height: 27px; flex: none; display: flex; align-items: center; background: #d4d0c8; border-top: 1px solid #fff; padding-left: 2px; position: relative; }
.start { width: 52px; height: 21px; display: flex; align-items: center; gap: 1px; padding-left: 2px; font: 700 12px "Liberation Sans", sans-serif; color: #000; background: #d4d0c8; border: 1px solid; border-color: #fff #404040 #404040 #fff; }
.tk { height: 23px; display: flex; align-items: center; justify-content: center; flex: none; }
.btn { border: 1px solid; border-color: #fff #404040 #404040 #fff; }
.t-ie { width: 18px; margin-left: 17px; }
.t-fold { width: 32px; margin-left: 9px; }
.t-wmp { width: 16px; margin-left: 10px; }
.t-chr { width: 32px; margin-left: 9px; }
.t-edge { width: 18px; margin-left: 9px; }
.t-rar { width: 32px; margin-left: 9px; }
.t-word { width: 31px; margin-left: 2px; }
.tk.active { background: #fff; border-color: #404040 #fff #fff #404040; }
.tray { margin-left: auto; margin-right: 4px; width: 154px; height: 21px; display: flex; align-items: center; gap: 6px; padding-left: 6px; border: 1px solid; border-color: #8a8a84 #fff #fff #8a8a84; color: #222; }
.clock { margin-left: 11px; white-space: nowrap; width: 48px; }
```
